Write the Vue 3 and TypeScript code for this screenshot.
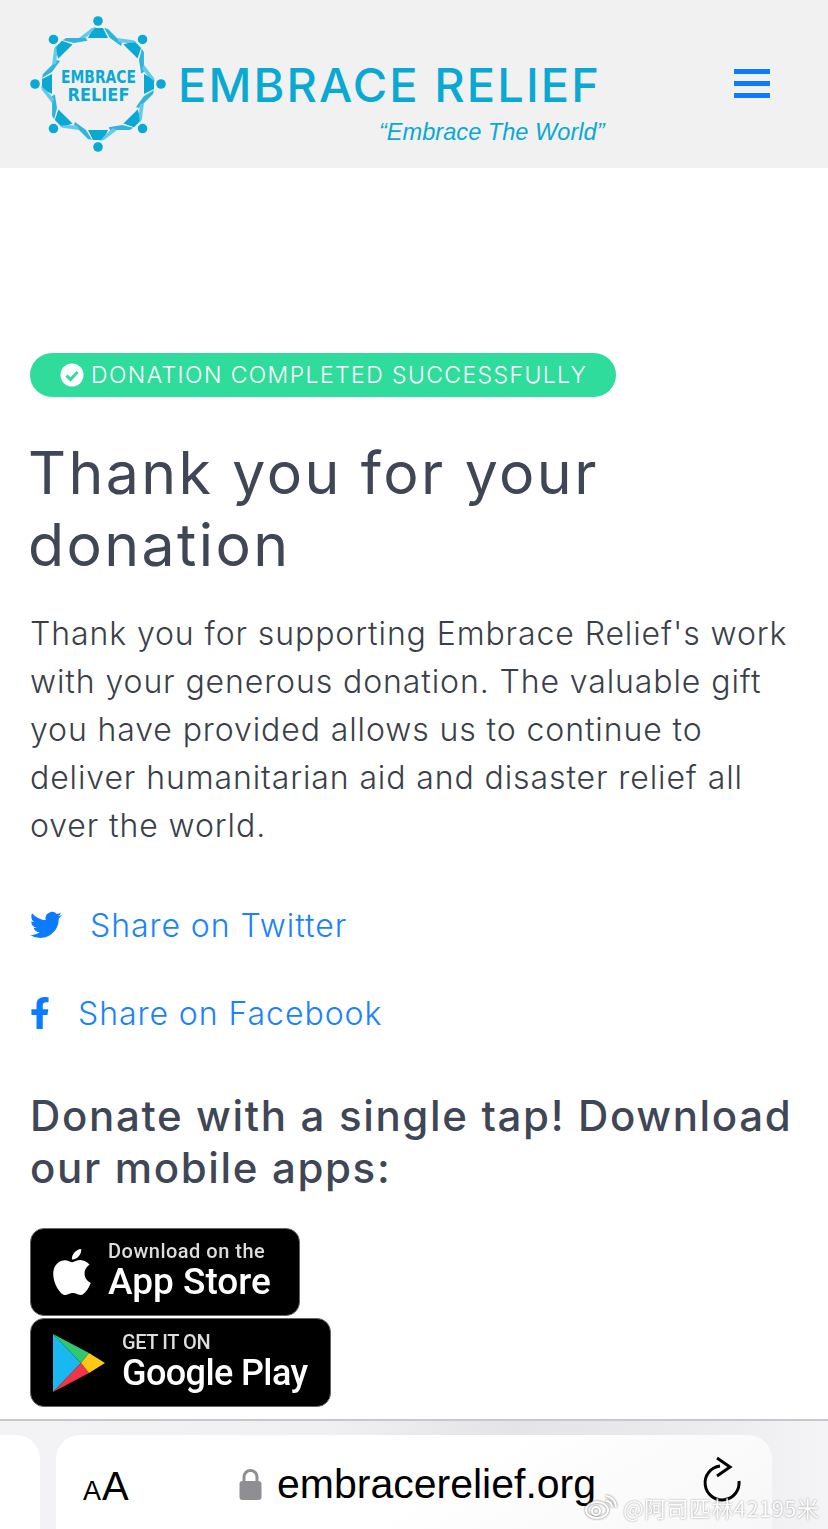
<script setup lang="ts">
const spokes = [0, 45, 90, 135, 180, 225, 270, 315];
</script>

<template>
  <div class="page">
    <header class="site-header">
      <div class="brand">
        <svg class="logo" width="140" height="140" viewBox="28 14 140 140">
          <g v-for="deg in spokes" :key="deg" :transform="`rotate(${deg} 98 84)`">
            <circle cx="98" cy="21" r="4.8" fill="#0aa9d3" />
            <polygon points="93,28 103,28 108,38 88,38" fill="#0aa9d3" />
            <polygon points="104,28 108,29 122,43 121,46 110,38" fill="#2fb5dc" />
            <polygon points="92,28 96,27 90,34 83,40 79,38" fill="#62cbec" />
          </g>
          <text x="98.5" y="82.5" class="logo-text" textLength="75" lengthAdjust="spacingAndGlyphs">EMBRACE</text>
          <text x="98.5" y="100.5" class="logo-text" textLength="62" lengthAdjust="spacingAndGlyphs">RELIEF</text>
        </svg>
        <div class="brand-copy">
          <div class="brand-name">EMBRACE RELIEF</div>
          <div class="brand-tag">“Embrace The World”</div>
        </div>
      </div>
      <button class="burger" aria-label="Menu"><span></span><span></span><span></span></button>
    </header>

    <main class="content">
      <div class="status-pill">
        <svg width="24" height="24" viewBox="0 0 24 24">
          <circle cx="12" cy="12" r="11.5" fill="#fff" />
          <path d="M6.5 12.5l4 4 7-7.5" fill="none" stroke="#2fdc9b" stroke-width="3" />
        </svg>
        <span>DONATION COMPLETED SUCCESSFULLY</span>
      </div>

      <h1>Thank you for your donation</h1>

      <p class="lead">
        Thank you for supporting Embrace Relief's work with your generous donation. The valuable gift
        you have provided allows us to continue to deliver humanitarian aid and disaster relief all
        over the world.
      </p>

      <a class="share share-twitter" href="#">
        <svg width="32" height="32" viewBox="0 0 24 24" fill="#0d7bff">
          <path d="M23.953 4.57a10 10 0 01-2.825.775 4.958 4.958 0 002.163-2.723c-.951.555-2.005.959-3.127 1.184a4.92 4.92 0 00-8.384 4.482C7.69 8.095 4.067 6.13 1.64 3.162a4.822 4.822 0 00-.666 2.475c0 1.71.87 3.213 2.188 4.096a4.904 4.904 0 01-2.228-.616v.06a4.923 4.923 0 003.946 4.827 4.996 4.996 0 01-2.212.085 4.936 4.936 0 004.604 3.417 9.867 9.867 0 01-6.102 2.105c-.39 0-.779-.023-1.17-.067a13.995 13.995 0 007.557 2.209c9.053 0 13.998-7.496 13.998-13.985 0-.21 0-.42-.015-.63A9.935 9.935 0 0024 4.59z" />
        </svg>
        <span>Share on Twitter</span>
      </a>
      <a class="share share-facebook" href="#">
        <svg width="20" height="32" viewBox="0 0 320 512" fill="#0d7bff">
          <path d="M279.14 288l14.22-92.66h-88.91v-60.13c0-25.35 12.42-50.06 52.24-50.06h40.42V6.26S260.43 0 225.36 0c-73.22 0-121.08 44.38-121.08 124.72v70.62H22.89V288h81.39v224h100.17V288z" />
        </svg>
        <span>Share on Facebook</span>
      </a>

      <h2>Donate with a single tap! Download our mobile apps:</h2>

      <div class="stores">
        <div class="store store-apple">
          <svg width="46" height="52" viewBox="0 0 24 24" fill="#fff">
            <path d="M12.152 6.896c-.948 0-2.415-1.078-3.96-1.04-2.04.027-3.91 1.183-4.961 3.014-2.117 3.675-.546 9.103 1.519 12.09 1.013 1.454 2.208 3.09 3.792 3.039 1.52-.065 2.09-.987 3.935-.987 1.831 0 2.35.987 3.96.948 1.637-.026 2.676-1.48 3.676-2.948 1.156-1.688 1.636-3.325 1.662-3.415-.039-.013-3.182-1.221-3.22-4.857-.026-3.04 2.48-4.494 2.597-4.559-1.429-2.09-3.623-2.324-4.39-2.376-2-.156-3.675 1.09-4.61 1.09zM15.53 3.83c.843-1.012 1.4-2.427 1.245-3.83-1.207.052-2.662.805-3.532 1.818-.78.896-1.454 2.338-1.273 3.714 1.338.104 2.715-.688 3.559-1.701" />
          </svg>
          <div class="store-copy">
            <small>Download on the</small>
            <strong>App Store</strong>
          </div>
        </div>
        <div class="store store-google">
          <svg width="54" height="60" viewBox="0 0 54 60">
            <polygon points="1,1 29,30 1,59" fill="#19b8f0" />
            <polygon points="1,1 37,20 29,30" fill="#2fc76f" />
            <polygon points="1,59 37,40 29,30" fill="#f0364a" />
            <polygon points="37,20 53,30 37,40 29,30" fill="#fdc816" />
          </svg>
          <div class="store-copy">
            <small class="caps">GET IT ON</small>
            <strong>Google Play</strong>
          </div>
        </div>
      </div>
    </main>

    <footer class="safari-bar">
      <div class="tab-edge"></div>
      <div class="address">
        <span class="aa"><i>A</i>A</span>
        <div class="url">
          <svg width="23" height="32" viewBox="0 0 23 32">
            <path d="M5 15V9a6.5 6.5 0 0113 0v6" fill="none" stroke="#8e8e93" stroke-width="3" />
            <rect x="0.5" y="13" width="22" height="19" rx="3" fill="#8e8e93" />
          </svg>
          <span>embracerelief.org</span>
        </div>
        <svg class="reload" width="40" height="48" viewBox="0 0 40 48">
          <path d="M18 10A17 17 0 1 0 37 25" fill="none" stroke="#000" stroke-width="3" />
          <path d="M15 2l13 9-13 9" fill="none" stroke="#000" stroke-width="3" />
        </svg>
      </div>
    </footer>

    <div class="watermark">
      <svg width="32" height="26" viewBox="0 0 32 26" fill="none" stroke="#fff" stroke-width="2">
        <ellipse cx="12" cy="16" rx="11" ry="8" />
        <circle cx="11" cy="17" r="4" />
        <path d="M21 7a6 6 0 016 6M21 2a11 11 0 0110 11" />
      </svg>
      <span>@阿司匹林42195米</span>
    </div>
  </div>
</template>

<style scoped>
.page {
  position: relative;
  width: 828px;
  height: 1529px;
  overflow: hidden;
  display: flex;
  flex-direction: column;
  background: #fff;
  font-family: "Inter", "Noto Sans", sans-serif;
}

/* Header */
.site-header {
  height: 168px;
  flex: none;
  display: flex;
  align-items: center;
  justify-content: space-between;
  padding: 0 58px 0 28px;
  background: #f1f1f1;
}
.brand {
  display: flex;
  align-items: flex-start;
  gap: 10px;
}
.logo-text {
  font-family: "DejaVu Sans", sans-serif;
  font-size: 18px;
  font-weight: 700;
  fill: #0aa9d3;
  text-anchor: middle;
}
.brand-copy {
  padding-top: 43px;
  width: 430px;
}
.brand-name {
  font-size: 47px;
  line-height: 56px;
  font-weight: 500;
  letter-spacing: 2.1px;
  color: #0aa9d3;
  white-space: nowrap;
}
.brand-tag {
  margin: 5px 0 0 201px;
  font-family: "Liberation Sans", sans-serif;
  font-style: italic;
  font-size: 23.6px;
  line-height: 28px;
  color: #0aa9d3;
  white-space: nowrap;
}
.burger {
  display: flex;
  flex-direction: column;
  gap: 7px;
  width: 36px;
  padding: 0;
  border: 0;
  background: none;
  margin-bottom: 1px;
}
.burger span {
  height: 5px;
  background: #0d7bff;
}

/* Main */
.content {
  flex: 1;
  min-height: 0;
  padding: 185px 30px 0;
  color: #3f4656;
}
.status-pill {
  width: 586px;
  height: 44px;
  display: flex;
  align-items: center;
  gap: 7px;
  padding-left: 30px;
  box-sizing: border-box;
  border-radius: 22px;
  background: #2fdc9b;
  color: #fff;
  font-size: 23px;
  font-weight: 300;
  letter-spacing: 1.4px;
  white-space: nowrap;
}
h1 {
  margin: 40px 0 0 -2px;
  font-size: 59px;
  line-height: 72px;
  font-weight: 400;
  letter-spacing: 2.4px;
}
.lead {
  margin: 29px 0 0;
  font-size: 32px;
  line-height: 48px;
  font-weight: 300;
  letter-spacing: 0.9px;
  color: #3a3f4a;
}
.share {
  display: flex;
  align-items: center;
  height: 48px;
  color: #1a82ff;
  font-size: 32px;
  font-weight: 300;
  letter-spacing: 0.95px;
  text-decoration: none;
}
.share-twitter {
  margin-top: 51px;
  gap: 28px;
}
.share-facebook {
  margin-top: 40px;
  gap: 28px;
}
h2 {
  margin: 53px 0 0;
  font-size: 42px;
  line-height: 52px;
  font-weight: 450;
  letter-spacing: 1.65px;
}

/* Store badges */
.stores {
  margin-top: 34px;
  display: flex;
  flex-direction: column;
  align-items: flex-start;
  gap: 2px;
  filter: blur(0.7px);
}
.store {
  display: flex;
  align-items: center;
  box-sizing: border-box;
  background: #000;
  border-radius: 14px;
  border: 1px solid #666;
  color: #fff;
  font-family: "Roboto", sans-serif;
}
.store-apple {
  width: 270px;
  height: 88px;
  padding-left: 18px;
  gap: 13px;
}
.store-google {
  width: 301px;
  height: 89px;
  padding-left: 21px;
  gap: 16px;
}
.store-copy {
  display: flex;
  flex-direction: column;
}
.store-copy small {
  font-size: 20px;
  line-height: 20px;
  font-weight: 500;
  letter-spacing: 0.5px;
  color: #ddd;
  white-space: nowrap;
}
.store-copy small.caps {
  letter-spacing: -0.4px;
}
.store-copy strong {
  font-size: 37px;
  line-height: 42px;
  font-weight: 500;
  white-space: nowrap;
}
.store-google strong {
  font-size: 36px;
  letter-spacing: -0.6px;
}

/* Browser toolbar */
.safari-bar {
  position: relative;
  flex: none;
  height: 110px;
  overflow: hidden;
  border-top: 2px solid #c8c8cc;
  background: linear-gradient(90deg, #f3f3f5, #f0f0f2 40%, #e4e4e8 62%, #ececef 85%, #f4f4f6);
  box-sizing: border-box;
  display: flex;
  gap: 16px;
  padding: 14px 0 0;
}
.tab-edge {
  width: 40px;
  flex: none;
  height: 120px;
  background: #fff;
  border-radius: 0 24px 24px 0;
}
.address {
  width: 716px;
  height: 120px;
  flex: none;
  box-sizing: border-box;
  display: flex;
  align-items: flex-start;
  padding: 26px 30px 0 27px;
  background: linear-gradient(150deg, #fff 50%, #f6f6f8);
  border-radius: 24px;
  color: #000;
  font-family: "Liberation Sans", sans-serif;
}
.aa {
  font-size: 40px;
  line-height: 46px;
  width: 103px;
  flex: none;
  padding-top: 2px;
}
.aa i {
  font-style: normal;
  font-size: 27px;
  margin-right: 1px;
}
.url {
  display: flex;
  align-items: center;
  gap: 15px;
  font-size: 41px;
  line-height: 46px;
  width: 519px;
  padding-left: 53px;
  box-sizing: border-box;
  white-space: nowrap;
}
.reload {
  margin-top: -5px;
  flex: none;
}
.watermark {
  position: absolute;
  left: 585px;
  top: 1491px;
  display: flex;
  align-items: center;
  gap: 6px;
  color: #fff;
  font-family: "Noto Sans CJK SC", sans-serif;
  font-size: 22px;
  letter-spacing: 0.4px;
  text-shadow: 0 0 2px #777;
  opacity: 0.85;
  white-space: nowrap;
}
.watermark svg {
  filter: drop-shadow(0 0 1px #555);
}
</style>
